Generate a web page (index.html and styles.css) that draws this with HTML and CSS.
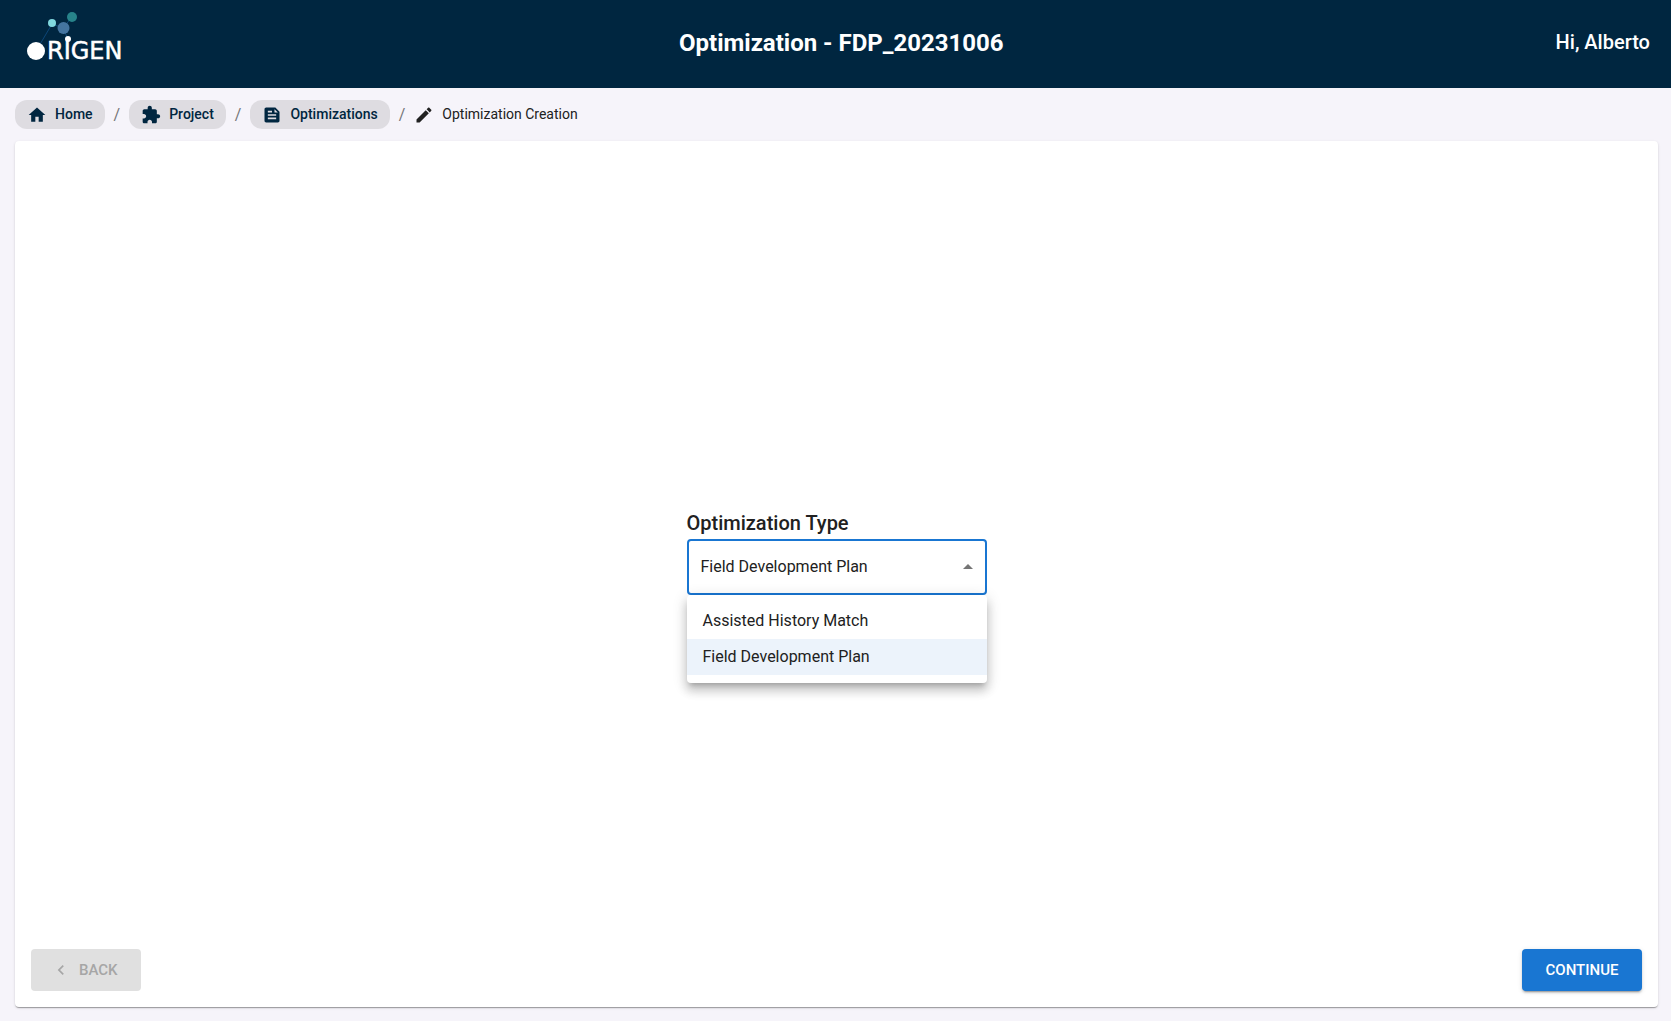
FILE: index.html
```html
<!DOCTYPE html>
<html lang="en">
<head>
<meta charset="utf-8">
<meta name="viewport" content="width=device-width, initial-scale=1">
<title>Optimization - FDP_20231006</title>
<link rel="stylesheet" href="styles.css">
</head>
<body>
<header class="topbar">
  <svg class="logo" width="100" height="52" viewBox="0 0 100 52" role="img" aria-label="Origen">
    <path class="logo-link" d="M9 39 25 12 36 16 45 5M36 16 41 27"/>
    <circle cx="9" cy="39" r="9" fill="#fff"/>
    <circle cx="25" cy="11" r="4" fill="#80d8de"/>
    <circle cx="36.500" cy="16" r="6" fill="#44749f"/>
    <circle cx="45" cy="5" r="5" fill="#27838a"/>
    <circle cx="41" cy="27" r="3" fill="#fff"/>
    <text class="logo-text" x="20" y="47">RIGEN</text>
  </svg>
  <h1 class="title">Optimization - FDP_20231006</h1>
  <span class="greeting">Hi, Alberto</span>
</header>
<nav class="crumbs" aria-label="Breadcrumb">
  <a class="chip" href="#">
    <svg class="icon" viewBox="0 0 24 24"><path d="M10 20v-6h4v6h5v-8h3L12 3 2 12h3v8z"/></svg>Home</a>
  <span class="slash">/</span>
  <a class="chip" href="#">
    <svg class="icon" viewBox="0 0 24 24"><path d="M20.500 11H19V7c0-1.100-.9-2-2-2h-4V3.500C13 2.120 11.880 1 10.500 1S8 2.120 8 3.500V5H4c-1.100 0-1.990.9-1.990 2v3.800H3.500c1.490 0 2.700 1.210 2.700 2.700s-1.210 2.700-2.700 2.700H2V20c0 1.100.9 2 2 2h3.800v-1.500c0-1.490 1.210-2.700 2.700-2.700s2.700 1.210 2.700 2.700V22H17c1.100 0 2-.9 2-2v-4h1.500c1.380 0 2.500-1.120 2.500-2.500S21.880 11 20.500 11z"/></svg>Project</a>
  <span class="slash">/</span>
  <a class="chip" href="#">
    <svg class="icon" viewBox="0 0 24 24"><path d="M16 3H5c-1.100 0-2 .9-2 2v14c0 1.100.9 2 2 2h14c1.100 0 2-.9 2-2V8l-5-5zM7 7h5v2H7V7zm10 10H7v-2h10v2zm0-4H7v-2h10v2zm-2-4V5l4 4h-4z"/></svg>Optimizations</a>
  <span class="slash">/</span>
  <span class="current" aria-current="page">
    <svg class="icon" viewBox="0 0 24 24"><path d="M3 17.250V21h3.750L17.810 9.940l-3.750-3.750L3 17.250zM20.710 7.040c.39-.39.39-1.020 0-1.410l-2.340-2.340c-.39-.39-1.020-.39-1.410 0l-1.830 1.830 3.750 3.750 1.830-1.830z"/></svg>Optimization Creation</span>
</nav>
<main class="card">
  <div class="center">
    <div class="field">
      <label class="label" for="type">Optimization Type</label>
      <div class="control">
        <select class="select" id="type">
          <option>Assisted History Match</option>
          <option selected>Field Development Plan</option>
        </select>
        <svg class="arrow" viewBox="0 0 24 24"><path d="M7 14l5-5 5 5z"/></svg>
        <ul class="menu" role="listbox" aria-label="Optimization Type">
          <li class="item" role="option" aria-selected="false">Assisted History Match</li>
          <li class="item selected" role="option" aria-selected="true">Field Development Plan</li>
        </ul>
      </div>
    </div>
  </div>
  <div class="actions">
    <button class="button back" type="button" disabled>
      <svg class="chevron" viewBox="0 0 24 24"><path d="M15.410 7.410 14 6l-6 6 6 6 1.410-1.410L10.830 12z"/></svg>BACK</button>
    <button class="button continue" type="button">CONTINUE</button>
  </div>
</main>
</body>
</html>
```
FILE: styles.css
```css
* { box-sizing: border-box; }

body {
  margin: 0;
  min-height: 100vh;
  display: flex;
  flex-direction: column;
  background: #f6f4fa;
  color: #212121;
  font-family: Roboto, "Liberation Sans", sans-serif;
  font-size: 16px;
  line-height: 24px;
}

.topbar {
  display: flex;
  align-items: flex-start;
  justify-content: space-between;
  height: 88px;
  padding: 12px 21px 0 27px;
  background: #002640;
  color: #fff;
}
.logo { display: block; }
.logo-link { fill: none; stroke: #0c4678; stroke-width: 1; }
.logo-text { fill: #fff; stroke: #fff; stroke-width: .5; font-family: "DejaVu Sans", sans-serif; font-size: 24px; }
.title { margin: 15px 0 0; font-size: 24px; line-height: 32px; font-weight: 700; }
.greeting { margin-top: 14px; font-size: 20px; line-height: 32px; font-weight: 500; }

.crumbs {
  display: flex;
  align-items: center;
  gap: 9px;
  padding: 12px 15px;
  font-size: 14px;
  line-height: 29px;
}
.chip, .current { display: flex; align-items: center; gap: 8px; }
.chip {
  padding: 0 12px;
  border-radius: 12px;
  background: #dedce1;
  color: #002640;
  font-weight: 500;
  text-decoration: none;
}
.icon { width: 20px; height: 20px; fill: currentColor; }
.slash { color: #757478; font-size: 16px; }

.card {
  flex: 1;
  display: flex;
  flex-direction: column;
  margin: 0 13px 14px 15px;
  padding: 16px;
  border-radius: 4px;
  background: #fff;
  box-shadow: 0 2px 1px -1px rgba(0, 0, 0, .2), 0 1px 1px rgba(0, 0, 0, .14), 0 1px 3px rgba(0, 0, 0, .12);
}
.center { flex: 1; display: flex; align-items: center; justify-content: center; padding-bottom: 4px; }
.field { width: 300px; }
.label { display: block; font-size: 20px; line-height: 32px; font-weight: 500; }
.control { position: relative; }
.select {
  display: block;
  width: 100%;
  height: 56px;
  padding: 0 32px 0 12px;
  border: 2px solid #1976d2;
  border-radius: 4px;
  outline: 0;
  appearance: none;
  background: #fff;
  color: inherit;
  font: inherit;
}
.arrow { position: absolute; top: 16px; right: 7px; width: 24px; height: 24px; fill: #757575; pointer-events: none; }
.menu {
  position: absolute;
  top: 100%;
  left: 0;
  width: 100%;
  margin: 0;
  padding: 8px 0;
  list-style: none;
  border-radius: 4px;
  background: #fff;
  box-shadow: 0 5px 5px -3px rgba(0, 0, 0, .2), 0 8px 10px 1px rgba(0, 0, 0, .14), 0 3px 14px 2px rgba(0, 0, 0, .12);
}
.item { padding: 6px 16px; }
.selected { background: #ecf3fb; }

.actions { display: flex; justify-content: space-between; }
.button {
  display: flex;
  align-items: center;
  justify-content: center;
  height: 42px;
  border: 0;
  border-radius: 4px;
  font-family: inherit;
  font-size: 15px;
  font-weight: 500;
}
.back { justify-content: flex-start; gap: 8px; width: 110px; padding: 0 20px; background: #e0e0e0; color: #a6a6a6; }
.chevron { width: 20px; height: 20px; fill: currentColor; }
.continue {
  width: 120px;
  background: #1976d2;
  color: #fff;
  box-shadow: 0 3px 1px -2px rgba(0, 0, 0, .2), 0 2px 2px rgba(0, 0, 0, .14), 0 1px 5px rgba(0, 0, 0, .12);
}
```
